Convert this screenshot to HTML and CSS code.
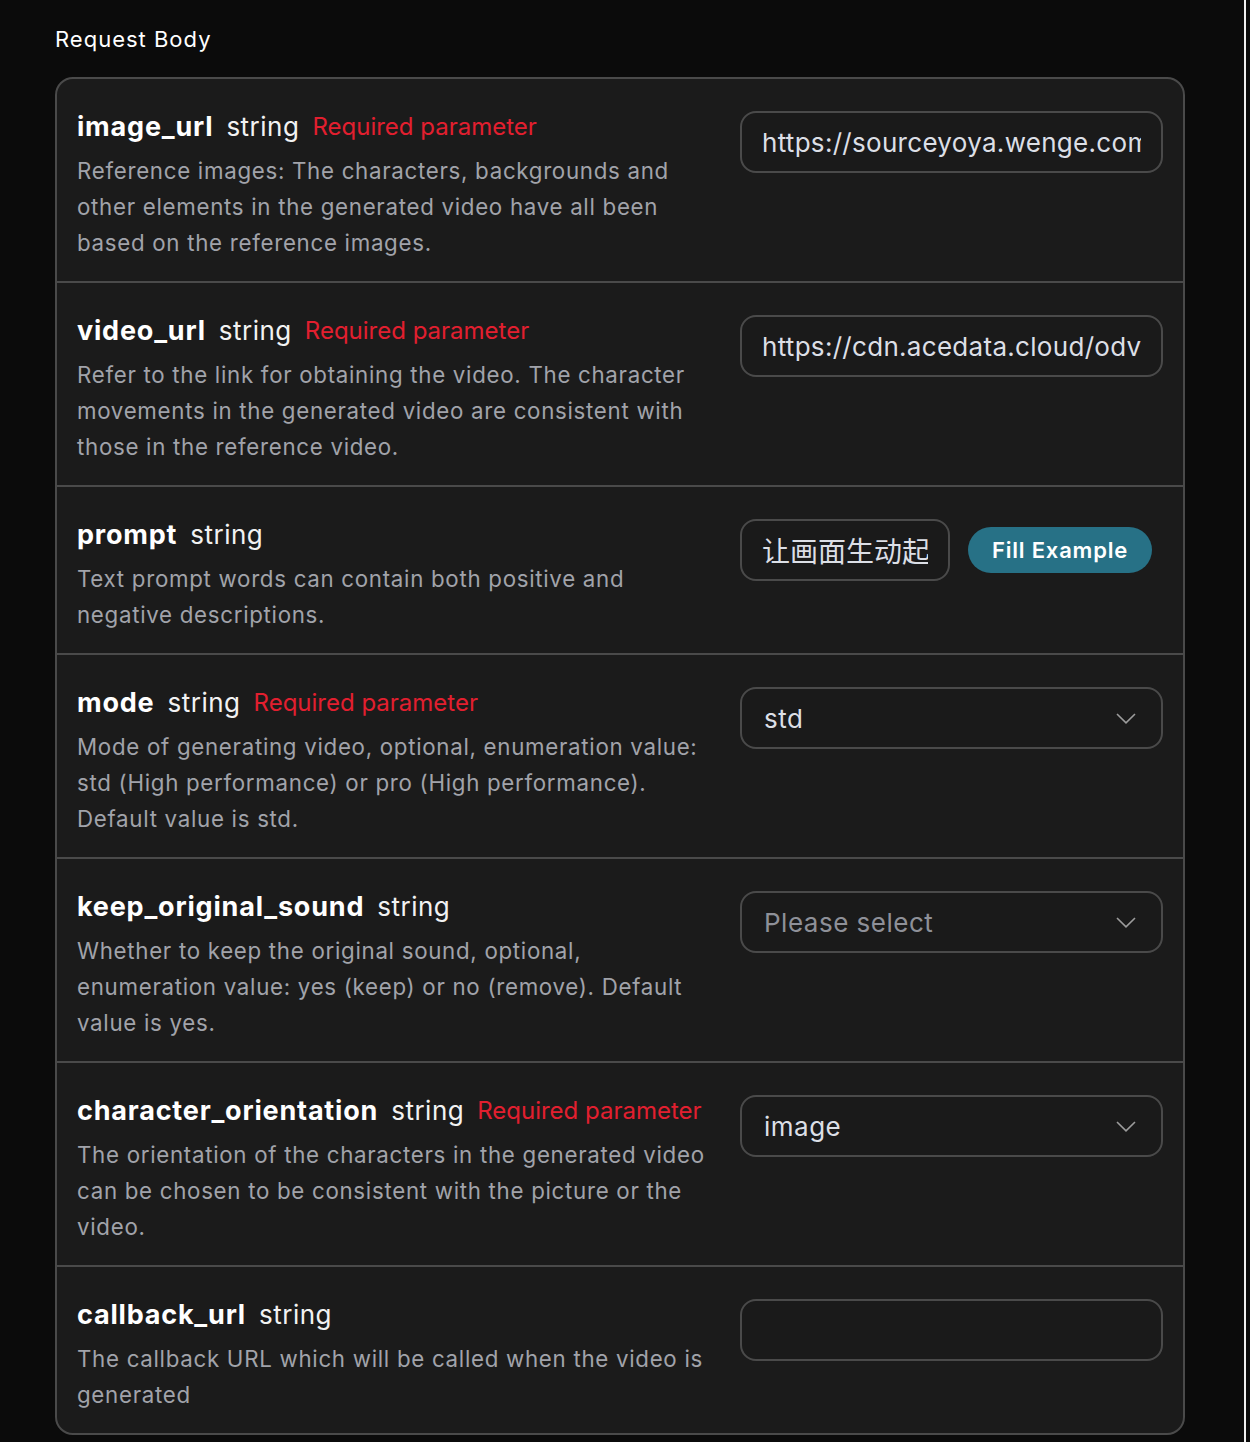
FILE: index.html
```html
<!DOCTYPE html>
<html lang="en">
<head>
<meta charset="utf-8">
<title>Request Body</title>
<link rel="stylesheet" href="styles.css">
</head>
<body>
<div class="page">
  <h2 class="heading">Request Body</h2>
  <div class="card">
    <div class="row">
      <div class="info">
        <div class="title"><span class="name">image_url</span><span class="type">string</span><span class="req">Required parameter</span></div>
        <p class="desc">Reference images: The characters, backgrounds and other elements in the generated video have all been based on the reference images.</p>
      </div>
      <div class="control">
        <input class="field" type="text" value="https://sourceyoya.wenge.com/image.png">
      </div>
    </div>
    <div class="row">
      <div class="info">
        <div class="title"><span class="name">video_url</span><span class="type">string</span><span class="req">Required parameter</span></div>
        <p class="desc">Refer to the link for obtaining the video. The character movements in the generated video are consistent with those in the reference video.</p>
      </div>
      <div class="control">
        <input class="field" type="text" value="https://cdn.acedata.cloud/odvideo.mp4">
      </div>
    </div>
    <div class="row">
      <div class="info">
        <div class="title"><span class="name">prompt</span><span class="type">string</span></div>
        <p class="desc">Text prompt words can contain both positive and negative descriptions.</p>
      </div>
      <div class="control control-inline">
        <input class="field field-short" type="text" value="让画面生动起来">
        <button class="fill" type="button">Fill Example</button>
      </div>
    </div>
    <div class="row">
      <div class="info">
        <div class="title"><span class="name">mode</span><span class="type">string</span><span class="req">Required parameter</span></div>
        <p class="desc">Mode of generating video, optional, enumeration value: std (High performance) or pro (High performance). Default value is std.</p>
      </div>
      <div class="control">
        <div class="select"><span class="value">std</span><svg class="chev" width="20" height="11" viewBox="0 0 20 11"><polyline points="1,1 10,9.8 19,1" fill="none" stroke="#9c9c9c" stroke-width="1.6"/></svg></div>
      </div>
    </div>
    <div class="row">
      <div class="info">
        <div class="title"><span class="name">keep_original_sound</span><span class="type">string</span></div>
        <p class="desc">Whether to keep the original sound, optional, enumeration value: yes (keep) or no (remove). Default value is yes.</p>
      </div>
      <div class="control">
        <div class="select"><span class="value placeholder">Please select</span><svg class="chev" width="20" height="11" viewBox="0 0 20 11"><polyline points="1,1 10,9.8 19,1" fill="none" stroke="#9c9c9c" stroke-width="1.6"/></svg></div>
      </div>
    </div>
    <div class="row">
      <div class="info">
        <div class="title"><span class="name">character_orientation</span><span class="type">string</span><span class="req">Required parameter</span></div>
        <p class="desc">The orientation of the characters in the generated video can be chosen to be consistent with the picture or the video.</p>
      </div>
      <div class="control">
        <div class="select"><span class="value">image</span><svg class="chev" width="20" height="11" viewBox="0 0 20 11"><polyline points="1,1 10,9.8 19,1" fill="none" stroke="#9c9c9c" stroke-width="1.6"/></svg></div>
      </div>
    </div>
    <div class="row">
      <div class="info">
        <div class="title"><span class="name">callback_url</span><span class="type">string</span></div>
        <p class="desc">The callback URL which will be called when the video is generated</p>
      </div>
      <div class="control">
        <input class="field" type="text" value="">
      </div>
    </div>
  </div>
</div>
</body>
</html>
```

FILE: styles.css
```css
html, body {
  margin: 0;
  padding: 0;
  background: #0b0b0b;
}

body {
  font-family: Inter, "Noto Sans", "Noto Sans CJK SC", sans-serif;
  color: #ffffff;
}

.page {
  width: 1189px;
  min-height: 1442px;
  padding-left: 55px;
  border-right: 2px solid #f0f0f0;
  box-sizing: content-box;
}

.heading {
  margin: 0;
  padding-top: 21px;
  height: 36px;
  line-height: 36px;
  font-size: 22px;
  font-weight: 400;
  letter-spacing: 1px;
  color: #ffffff;
  margin-bottom: 20px;
}

.card {
  width: 1130px;
  box-sizing: border-box;
  background: #1b1b1b;
  border: 2px solid #4a4a4a;
  border-radius: 18px;
  overflow: hidden;
}

.row {
  display: grid;
  grid-template-columns: 1fr 423px;
  column-gap: 20px;
  padding: 20px 20px;
}

.row + .row {
  border-top: 2px solid #4a4a4a;
}

.title {
  height: 54px;
  display: flex;
  align-items: center;
  gap: 13px;
  white-space: nowrap;
}

.name {
  font-size: 27px;
  font-weight: 700;
  letter-spacing: 0.8px;
  color: #ffffff;
}

.type {
  font-size: 26px;
  font-weight: 400;
  letter-spacing: 0.5px;
  color: #f2f2f2;
}

.req {
  font-size: 24px;
  font-weight: 400;
  color: #e21f2f;
}

.desc {
  margin: 0;
  font-size: 22.3px;
  line-height: 36px;
  letter-spacing: 0.7px;
  color: #a1a3aa;
}

.control {
  padding-top: 12px;
}

.control-inline {
  display: flex;
  align-items: flex-start;
  gap: 18px;
}

.field {
  display: block;
  width: 100%;
  height: 62px;
  box-sizing: border-box;
  padding: 0 20px;
  background: #1a1a1a;
  border: 2px solid #4a4a4a;
  border-radius: 16px;
  font-family: Inter, "Noto Sans CJK SC", sans-serif;
  font-size: 26px;
  letter-spacing: 0.3px;
  color: #dcdfe6;
  outline: none;
}

.field-short {
  width: 210px;
  flex: none;
  font-size: 28px;
  letter-spacing: 0;
}

.fill {
  margin-top: 8px;
  height: 46px;
  padding: 0 24px;
  border: none;
  border-radius: 23px;
  background: #277186;
  color: #ffffff;
  font-family: Inter, sans-serif;
  font-size: 22px;
  font-weight: 600;
  letter-spacing: 0.8px;
}

.select {
  height: 62px;
  box-sizing: border-box;
  padding: 0 25px 0 22px;
  background: #1a1a1a;
  border: 2px solid #4a4a4a;
  border-radius: 16px;
  display: flex;
  align-items: center;
  justify-content: space-between;
}

.value {
  font-size: 26px;
  letter-spacing: 0.5px;
  color: #dcdfe6;
}

.placeholder {
  color: #8e9098;
}

.chev {
  display: block;
}
```
